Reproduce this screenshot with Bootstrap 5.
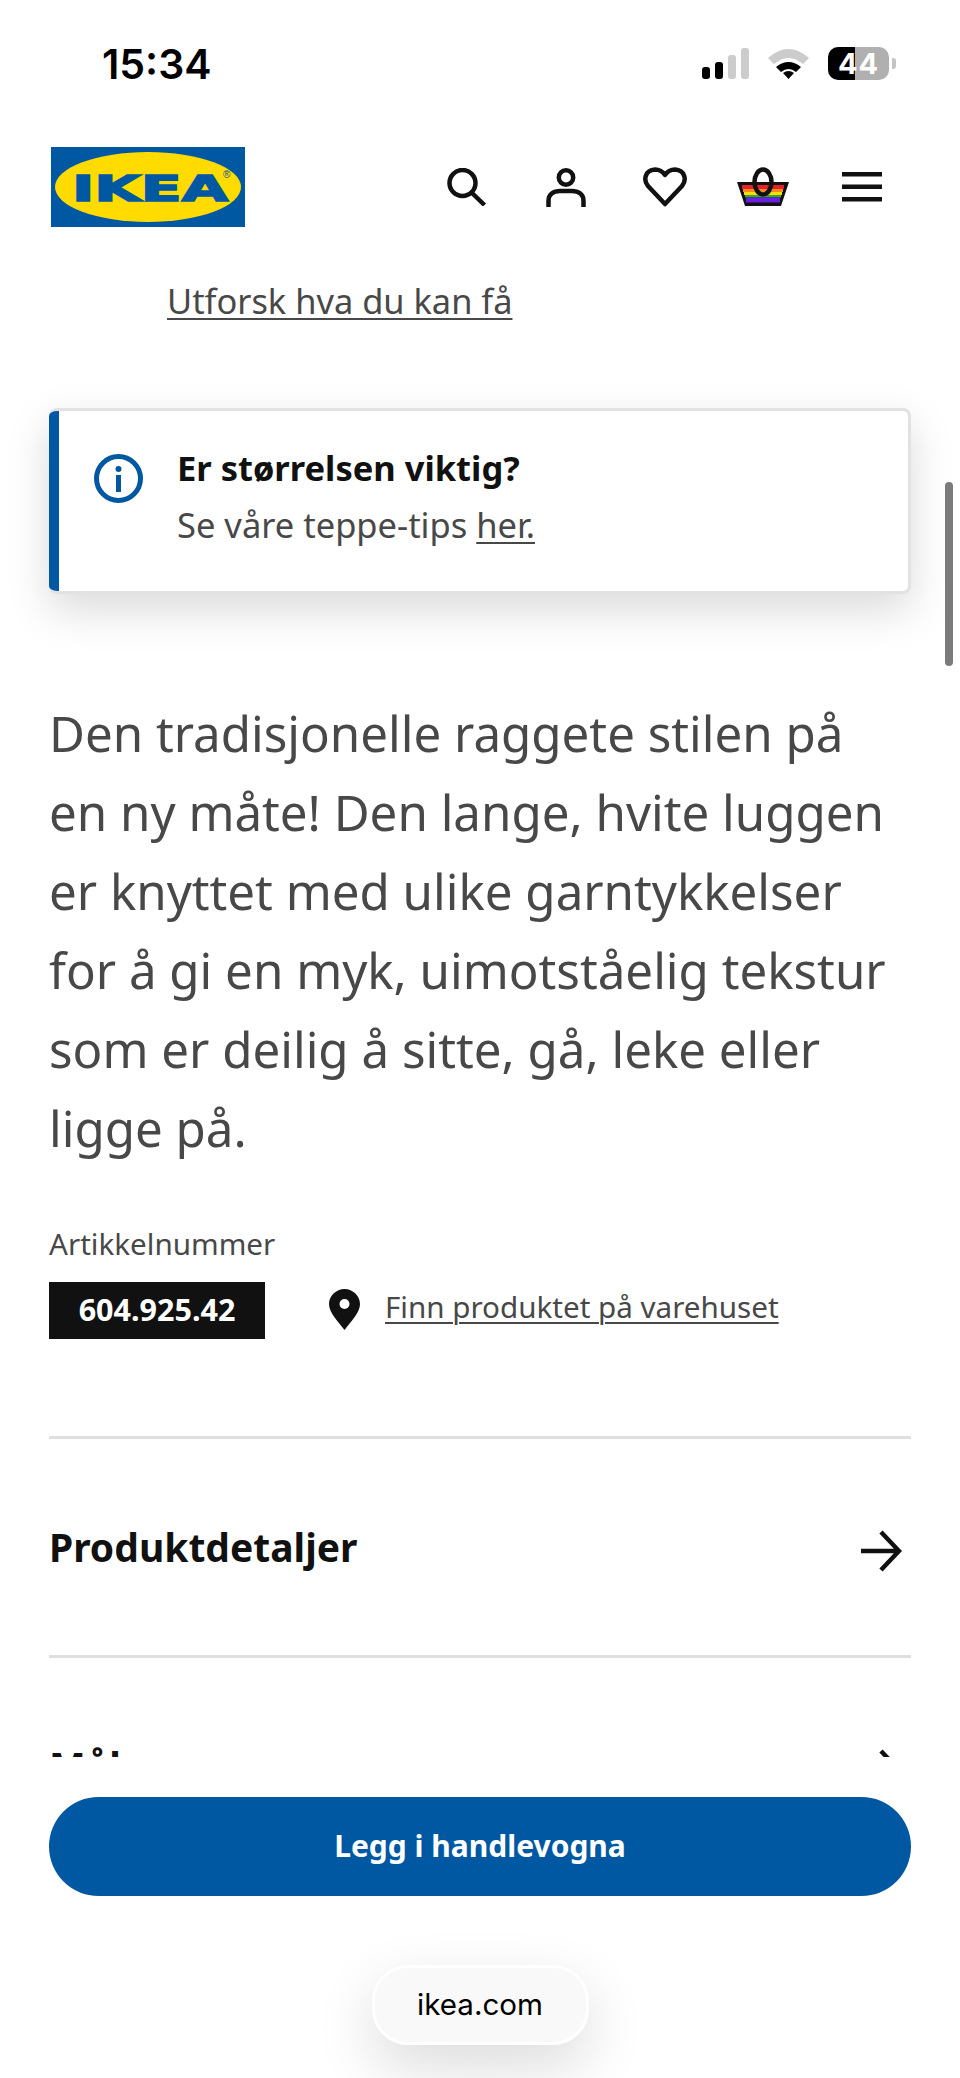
<!DOCTYPE html>
<html lang="nb">
<head>
    <meta charset="UTF-8">
    <meta name="viewport" content="width=device-width, initial-scale=1.0">
    <title>IKEA - Produkt</title>
    <link href="https://cdn.jsdelivr.net/npm/bootstrap@5.3.0/dist/css/bootstrap.min.css" rel="stylesheet">
    <style>
        body { font-family: "Noto Sans", sans-serif; color: #484848; background: #fff; overflow: hidden; }
        a { color: #484848; text-decoration-thickness: 2px; text-underline-offset: 4px; }
        .phone { width: 960px; height: 2078px; overflow: hidden; }
        .page-top { height: 1757px; overflow: hidden; }

        .status-row { height: 147px; padding: 39px 64px 0 102px; align-items: flex-start; }
        .status-icons { height: 33px; margin-top: 8px; }
        .clock { font-family: Inter, sans-serif; font-weight: 600; font-size: 41px; line-height: 50px; color: #000; }
        .wifi-icon { margin: 0 19px 0 18px; }
        .battery { width: 61px; height: 33px; border-radius: 10px; background: linear-gradient(90deg, #000 27px, #b0b0b0 27px); color: #fff;
            font-family: Inter, sans-serif; font-weight: 700; font-size: 29px; line-height: 33px; text-align: center; letter-spacing: 1px; }
        .battery-nub { width: 4px; height: 11px; background: #c4c4c4; border-radius: 0 3px 3px 0; margin-left: 3px; }

        .site-head { padding: 0 49px 0 51px; height: 80px; }
        .head-btn { width: 98.6px; height: 48px; }

        .explore-link { margin: 49px 0 0 167px; font-size: 34.4px; line-height: 50px; display: block; }

        .tip-card { margin: 82px 49px 0; height: 186px; border: 3px solid #e2e2e2; border-left: 0; border-radius: 8px; background: #fff;
            box-shadow: 0 16px 44px rgba(0, 0, 0, .15); overflow: hidden; }
        .tip-bar { width: 10px; background: #0058a3; }
        .tip-icon { margin: 43px 34px 0 35px; }
        .tip-title { font-weight: 700; font-size: 34.5px; line-height: 44px; color: #111; margin-top: 35px; }
        .tip-text { font-size: 34.5px; line-height: 44px; margin-top: 13px; }

        .intro { margin: 99px 49px 0; font-size: 49.25px; line-height: 79px; }
        .art-label { margin: 57px 49px 0; font-size: 29.6px; line-height: 40px; }
        .art-row { margin: 18px 49px 0; }
        .art-number { width: 216px; height: 57px; background: #111; color: #fff; font-weight: 700; font-size: 30.5px; line-height: 55px; text-align: center; }
        .find-link { font-size: 29.6px; line-height: 40px; margin: -7px 0 0 25px; }
        .pin-icon { margin-left: 64px; margin-top: -2px; }

        .detail-row { margin: 0 49px; height: 219px; border-top: 3px solid #dfdfdf; padding-right: 9px; }
        .detail-title { font-weight: 700; font-size: 39px; line-height: 50px; color: #111; }
        .detail-arrow { margin-top: 8px; }
        .first-detail { margin-top: 97px; }

        .page-bottom { padding: 40px 49px 0 49px; }
        .buy-btn { height: 99px; border-radius: 50px; border: 0; background: #0058a3; color: #fff; font-weight: 700; font-size: 30px; padding-bottom: 8px; }
        .buy-btn:hover { background: #004f93; color: #fff; }
        .url-pill { width: 217px; height: 80px; margin: 69px auto 0; border: 3px solid #fff; border-radius: 36px; background: #f9f9f9; padding-bottom: 2px;
            font-family: Inter, sans-serif; font-size: 29.6px; color: #000; box-shadow: 0 22px 60px rgba(0, 0, 0, .14); }

        .scroll-thumb { position: absolute; left: 945px; top: 482px; width: 8px; height: 184px; border-radius: 4px; background: #7b7b7b; }
    </style>
</head>
<body>
    <div class="phone position-relative">
        <div class="page-top">
            <div class="status-row d-flex justify-content-between">
                <div class="clock">15:34</div>
                <div class="status-icons d-flex align-items-center">
                    <svg width="48" height="31" viewBox="0 0 48 31">
                        <rect x="0" y="19" width="8" height="12" rx="3" fill="#000"/>
                        <rect x="13" y="14" width="8" height="17" rx="3" fill="#000"/>
                        <rect x="26" y="7" width="8" height="24" rx="3" fill="#ccc"/>
                        <rect x="39" y="0" width="8" height="31" rx="3" fill="#ccc"/>
                    </svg>
                    <svg class="wifi-icon" width="41" height="31" viewBox="0 0 41 31">
                        <path d="M0 10 Q20.5 -8 41 10 L35 16 Q20.5 4 6 16 Z" fill="#ccc"/>
                        <path d="M8 19 Q20.5 9 33 19 L28 24 Q20.5 18 13 24 Z" fill="#000"/>
                        <path d="M15 25 Q20.5 21 26 25 L20.5 31 Z" fill="#000"/>
                    </svg>
                    <div class="battery">44</div>
                    <div class="battery-nub"></div>
                </div>
            </div>

            <header class="site-head d-flex justify-content-between align-items-center">
                <svg width="194" height="80" viewBox="0 0 194 80">
                    <rect width="194" height="80" fill="#0058a3"/>
                    <ellipse cx="97" cy="40" rx="93" ry="35" fill="#ffdb00"/>
                    <text x="21" y="53.5" font-family="DejaVu Sans" font-weight="700" font-size="36" fill="#0058a3" stroke="#0058a3" stroke-width="1.6" textLength="156" lengthAdjust="spacingAndGlyphs">IKEA</text>
                    <text x="172" y="31" font-family="Liberation Sans" font-size="10" fill="#0058a3">®</text>
                </svg>
                <nav class="d-flex">
                    <a class="head-btn d-flex align-items-center justify-content-center" href="#" aria-label="Søk">
                        <svg width="40" height="38" viewBox="0 0 40 38" fill="none" stroke="#111" stroke-width="4.5">
                            <circle cx="15.5" cy="15" r="13"/>
                            <path d="M24.5 24.5 L37.5 37"/>
                        </svg>
                    </a>
                    <a class="head-btn d-flex align-items-center justify-content-center" href="#" aria-label="Konto">
                        <svg width="40" height="39" viewBox="0 0 40 39" fill="none" stroke="#111" stroke-width="4.5">
                            <circle cx="20" cy="9.5" r="7.2"/>
                            <path d="M2.5 39 V33 C2.5 26 8 23 14 23 H26 C32 23 37.5 26 37.5 33 V39"/>
                        </svg>
                    </a>
                    <a class="head-btn d-flex align-items-center justify-content-center" href="#" aria-label="Favoritter">
                        <svg width="44" height="40" viewBox="0 0 44 40" fill="none" stroke="#111" stroke-width="4.5">
                            <path d="M22 37 L5 19 C0 13 2 3 12 2.5 C17 2.5 20 5 22 8 C24 5 27 2.5 32 2.5 C42 3 44 13 39 19 Z" stroke-linejoin="round"/>
                        </svg>
                    </a>
                    <a class="head-btn d-flex align-items-center justify-content-center" href="#" aria-label="Handlevogn">
                        <svg width="52" height="40" viewBox="0 0 52 40">
                            <path d="M0 15 H52 L44 39 H8 Z" fill="#111"/>
                            <rect x="5" y="18" width="42" height="4" fill="#e8202a"/>
                            <rect x="6" y="22" width="40" height="3" fill="#f28a1c"/>
                            <rect x="7" y="25" width="38" height="3" fill="#ffdb00"/>
                            <rect x="8" y="28" width="36" height="2.5" fill="#2fa83f"/>
                            <rect x="9" y="30.5" width="34" height="5" fill="#6a1fe0"/>
                            <ellipse cx="26" cy="15" rx="8.5" ry="12.5" fill="none" stroke="#111" stroke-width="4.5"/>
                        </svg>
                    </a>
                    <a class="head-btn d-flex align-items-center justify-content-center" href="#" aria-label="Meny">
                        <svg width="40" height="30" viewBox="0 0 40 30" fill="#111">
                            <rect y="0" width="40" height="4.5"/>
                            <rect y="12.5" width="40" height="4.5"/>
                            <rect y="25" width="40" height="4.5"/>
                        </svg>
                    </a>
                </nav>
            </header>

            <a class="explore-link" href="#">Utforsk hva du kan få</a>

            <div class="tip-card d-flex">
                <div class="tip-bar"></div>
                <svg class="tip-icon flex-shrink-0" width="49" height="49" viewBox="0 0 49 49">
                    <circle cx="24.5" cy="24.5" r="22" fill="none" stroke="#0058a3" stroke-width="5"/>
                    <circle cx="24.5" cy="15" r="3" fill="#0058a3"/>
                    <rect x="22" y="21" width="5" height="17" fill="#0058a3"/>
                </svg>
                <div>
                    <div class="tip-title">Er størrelsen viktig?</div>
                    <div class="tip-text">Se våre teppe-tips <a href="#">her.</a></div>
                </div>
            </div>

            <p class="intro">Den tradisjonelle raggete stilen på<br>en ny måte! Den lange, hvite luggen<br>er knyttet med ulike garntykkelser<br>for å gi en myk, uimotståelig tekstur<br>som er deilig å sitte, gå, leke eller<br>ligge på.</p>

            <div class="art-label">Artikkelnummer</div>
            <div class="art-row d-flex align-items-center">
                <div class="art-number">604.925.42</div>
                <svg class="pin-icon" width="31" height="41" viewBox="0 0 31 41">
                    <path d="M15.5 0 C7 0 0 7 0 15 C0 24 9 32 15.5 41 C22 32 31 24 31 15 C31 7 24 0 15.5 0 Z" fill="#111"/>
                    <circle cx="15.5" cy="15" r="5" fill="#fff"/>
                </svg>
                <a class="find-link" href="#">Finn produktet på varehuset</a>
            </div>

            <div class="detail-row first-detail d-flex justify-content-between align-items-center">
                <span class="detail-title">Produktdetaljer</span>
                <svg class="detail-arrow" width="41" height="42" viewBox="0 0 41 42" fill="none" stroke="#111" stroke-width="4.5">
                    <path d="M0 21 H38 M20 2 L38 21 L20 40"/>
                </svg>
            </div>
            <div class="detail-row d-flex justify-content-between align-items-center">
                <span class="detail-title">Mål</span>
                <svg class="detail-arrow" width="41" height="42" viewBox="0 0 41 42" fill="none" stroke="#111" stroke-width="4.5">
                    <path d="M0 21 H38 M20 2 L38 21 L20 40"/>
                </svg>
            </div>
        </div>

        <div class="page-bottom">
            <button class="btn buy-btn w-100" type="button">Legg i handlevogna</button>
            <div class="url-pill d-flex align-items-center justify-content-center">ikea.com</div>
        </div>

        <div class="scroll-thumb"></div>
    </div>

    <script src="https://cdn.jsdelivr.net/npm/bootstrap@5.3.0/dist/js/bootstrap.bundle.min.js"></script>
</body>
</html>
